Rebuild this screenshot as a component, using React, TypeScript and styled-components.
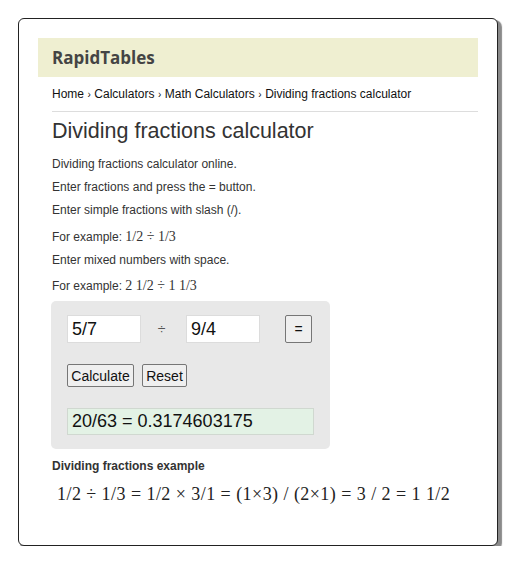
import styled, { createGlobalStyle } from "styled-components";

const Global = createGlobalStyle`
  html, body {
    margin: 0;
    padding: 0;
    background: #fff;
  }
  body {
    font-family: "Liberation Sans", Arial, sans-serif;
    color: #333;
  }
`;

const Card = styled.div`
  margin: 18px 0 0 18px;
  width: 480px;
  height: 528px;
  box-sizing: border-box;
  border: 1px solid #222;
  border-radius: 6px;
  box-shadow: 3px 3px 1px 1px #8a8a8a;
  padding: 19px;
  background: #fff;
`;

const Header = styled.div`
  height: 39px;
  background: #efefd1;
  display: flex;
  align-items: center;
  padding-left: 14px;
  font-family: "Open Sans", sans-serif;
  font-weight: 700;
  font-size: 17px;
  color: #444;
`;

const Content = styled.div`
  padding-left: 14px;
`;

const Crumbs = styled.div`
  font-size: 12px;
  color: #111;
  padding: 10px 0 10px;
  border-bottom: 1px solid #ddd;
`;

const Sep = styled.span`
  font-size: 10px;
  margin: 0 3.5px;
`;

const Title = styled.h1`
  font-size: 21.5px;
  font-weight: 400;
  color: #333;
  margin: 6px 0 13px;
  line-height: 26px;
`;

const Para = styled.p<{ $gap?: number }>`
  font-size: 12px;
  margin: 0 0 ${(p) => p.$gap ?? 9}px;
  line-height: 14px;
  color: #333;
`;

const Math = styled.span`
  font-family: "Liberation Serif", "Times New Roman", serif;
  font-size: 14px;
  line-height: 14px;
`;

const CalcBox = styled.div`
  margin: 8px 0 0 -1px;
  width: 279px;
  height: 148px;
  background: #e8e8e8;
  border-radius: 5px;
  padding: 14px 16px;
  box-sizing: border-box;
  display: flex;
  flex-direction: column;
`;

const Row = styled.div`
  display: flex;
  align-items: center;
`;

const Field = styled.div`
  width: 74px;
  height: 28px;
  box-sizing: border-box;
  background: #fff;
  border: 1px solid #dcdcdc;
  font-size: 18px;
  color: #111;
  display: flex;
  align-items: center;
  padding-left: 4px;
`;

const Op = styled.span`
  width: 45px;
  padding-right: 4px;
  box-sizing: border-box;
  text-align: center;
  font-size: 14px;
  color: #555;
`;

const Spacer = styled.span`
  width: 25px;
`;

const Btn = styled.button<{ $w: number; $h: number }>`
  width: ${(p) => p.$w}px;
  height: ${(p) => p.$h}px;
  padding: 0;
  background: #efefef;
  border: 1px solid #767676;
  border-radius: 2px;
  font-family: "Liberation Sans", Arial, sans-serif;
  font-size: 14px;
  color: #111;
`;

const Buttons = styled.div`
  display: flex;
  gap: 8px;
  margin-top: 21px;
`;

const Result = styled.div`
  margin-top: 21px;
  width: 247px;
  height: 28px;
  box-sizing: border-box;
  background: #e3f2e5;
  border: 1px solid #d0d8d0;
  font-size: 18px;
  color: #111;
  display: flex;
  align-items: center;
  padding-left: 4px;
`;

const SubHead = styled.h3`
  font-size: 12px;
  font-weight: 700;
  color: #333;
  margin: 10px 0 0;
  line-height: 14px;
`;

const Formula = styled.div`
  font-family: "Liberation Serif", "Times New Roman", serif;
  font-size: 18px;
  letter-spacing: 0.45px;
  color: #222;
  margin: 11px 0 0 5px;
`;

const App = () => {
  return (
    <>
      <Global />
      <Card>
        <Header>RapidTables</Header>
        <Content>
          <Crumbs>
            Home<Sep>›</Sep>Calculators<Sep>›</Sep>Math Calculators<Sep>›</Sep>Dividing fractions calculator
          </Crumbs>
          <Title>Dividing fractions calculator</Title>
          <Para>Dividing fractions calculator online.</Para>
          <Para>Enter fractions and press the = button.</Para>
          <Para $gap={13}>Enter simple fractions with slash (/).</Para>
          <Para $gap={9}>
            For example: <Math>1/2 ÷ 1/3</Math>
          </Para>
          <Para $gap={12}>Enter mixed numbers with space.</Para>
          <Para $gap={0}>
            For example: <Math>2 1/2 ÷ 1 1/3</Math>
          </Para>
          <CalcBox>
            <Row>
              <Field>5/7</Field>
              <Op>÷</Op>
              <Field>9/4</Field>
              <Spacer />
              <Btn $w={27} $h={28}>=</Btn>
            </Row>
            <Buttons>
              <Btn $w={67} $h={23}>Calculate</Btn>
              <Btn $w={45} $h={23}>Reset</Btn>
            </Buttons>
            <Result>20/63 = 0.3174603175</Result>
          </CalcBox>
          <SubHead>Dividing fractions example</SubHead>
          <Formula>1/2 ÷ 1/3 = 1/2 × 3/1 = (1×3) / (2×1) = 3 / 2 = 1 1/2</Formula>
        </Content>
      </Card>
    </>
  );
};

export default App;
